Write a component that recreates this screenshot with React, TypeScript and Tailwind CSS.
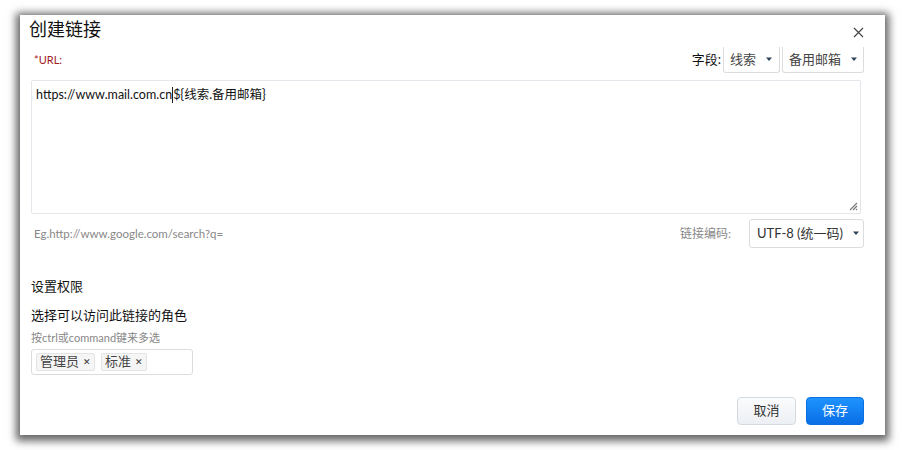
import React from "react";

function Caret() {
  return (
    <svg width="8" height="5" viewBox="0 0 8 5" className="ml-[9px]">
      <path d="M1 0.5 L7 0.5 L4 4 Z" fill="#2d4259" />
    </svg>
  );
}

export default function App() {
  return (
    <div className="w-[905px] h-[450px] bg-white pl-[20px] pt-[15px] font-['Lato','Noto_Sans_CJK_SC',sans-serif] text-[#333]">
      <div className="relative w-[865px] h-[420px] bg-white shadow-[0_2px_8px_4px_rgba(0,0,0,0.6)] flex flex-col">
        <div className="h-[32px] pl-[9px] flex items-start">
          <span className="text-[18px] leading-[28px] text-[#111]">创建链接</span>
        </div>
        <button className="absolute right-[21px] top-[11px] w-[12px] h-[12px] flex items-center justify-center">
          <svg width="11" height="11" viewBox="0 0 11 11">
            <path d="M1 1 L10 10 M10 1 L1 10" stroke="#444" strokeWidth="1.2" />
          </svg>
        </button>
        <div className="pl-[11px] pr-[21px] flex flex-col">
          <div className="h-[26px] flex items-center justify-between">
            <span className="pl-[3px] text-[11px] text-[#9e1c1c]">*URL:</span>
            <div className="flex items-center h-full">
              <span className="text-[13px] text-[#111] mr-[2px]">字段:</span>
              <div className="h-full w-[57px] border-x border-b border-[#dcdcdc] rounded-b-[3px] flex items-center pl-[6px] text-[13px] text-[#444]">
                线索<Caret />
              </div>
              <div className="h-full w-[82px] ml-[2px] border-x border-b border-[#dcdcdc] rounded-b-[3px] flex items-center pl-[6px] text-[13px] text-[#444]">
                备用邮箱<Caret />
              </div>
            </div>
          </div>
          <div className="relative mt-[7px] h-[134px] w-[830px] border border-[#e3e6ea] rounded-[2px] px-[4px] pt-[5px]">
            <div className="text-[12.5px] leading-[18px] text-[#111] flex items-center">
              <span>https://www.mail.com.cn</span>
              <span className="inline-block w-[1px] h-[16px] bg-[#222]"></span>
              <span>{"${线索.备用邮箱}"}</span>
            </div>
            <svg className="absolute right-[2px] bottom-[2px]" width="10" height="10" viewBox="0 0 10 10">
              <path d="M9 2 L2 9 M9 5 L5 9 M9 8 L8 9" stroke="#777" strokeWidth="1.1" />
            </svg>
          </div>
          <div className="mt-[5px] h-[29px] flex items-center justify-between">
            <span className="pl-[3px] text-[11.5px] text-[#888]">Eg.http://www.google.com/search?q=</span>
            <div className="flex items-center h-full">
              <span className="text-[12px] text-[#888] mr-[18px]">链接编码:</span>
              <div className="h-full w-[115px] border border-[#dcdcdc] rounded-[3px] flex items-center pl-[7px] text-[13px] text-[#333]">
                UTF-8 (统一码)<Caret />
              </div>
            </div>
          </div>
          <div className="mt-[28px] text-[13px] leading-[20px] text-[#111]">设置权限</div>
          <div className="mt-[9px] text-[13px] leading-[20px] text-[#111]">选择可以访问此链接的角色</div>
          <div className="mt-[5px] text-[11px] leading-[16px] text-[#888]">按ctrl或command键来多选</div>
          <div className="mt-[3px] h-[26px] w-[162px] border border-[#dcdcdc] rounded-[3px] flex items-center pl-[4px] gap-[6px]">
            <span className="h-[18px] flex items-center bg-[#f5f5f5] border border-[#e4e4e4] rounded-[2px] px-[3px] text-[13px] text-[#444]">
              管理员<span className="ml-[4px] text-[9px] text-[#333]">✕</span>
            </span>
            <span className="h-[18px] flex items-center bg-[#f5f5f5] border border-[#e4e4e4] rounded-[2px] px-[3px] text-[13px] text-[#444]">
              标准<span className="ml-[4px] text-[9px] text-[#333]">✕</span>
            </span>
          </div>
          <div className="mt-[22px] flex justify-end gap-[10px]">
            <button className="h-[28px] w-[59px] rounded-[4px] border border-[#d5dae0] bg-gradient-to-b from-[#fbfcfd] to-[#eceff3] text-[13px] text-[#333]">
              取消
            </button>
            <button className="h-[28px] w-[58px] rounded-[4px] border border-[#0a6fe0] bg-gradient-to-b from-[#1f93ff] to-[#0a6ee6] text-[13px] text-white">
              保存
            </button>
          </div>
        </div>
      </div>
    </div>
  );
}
